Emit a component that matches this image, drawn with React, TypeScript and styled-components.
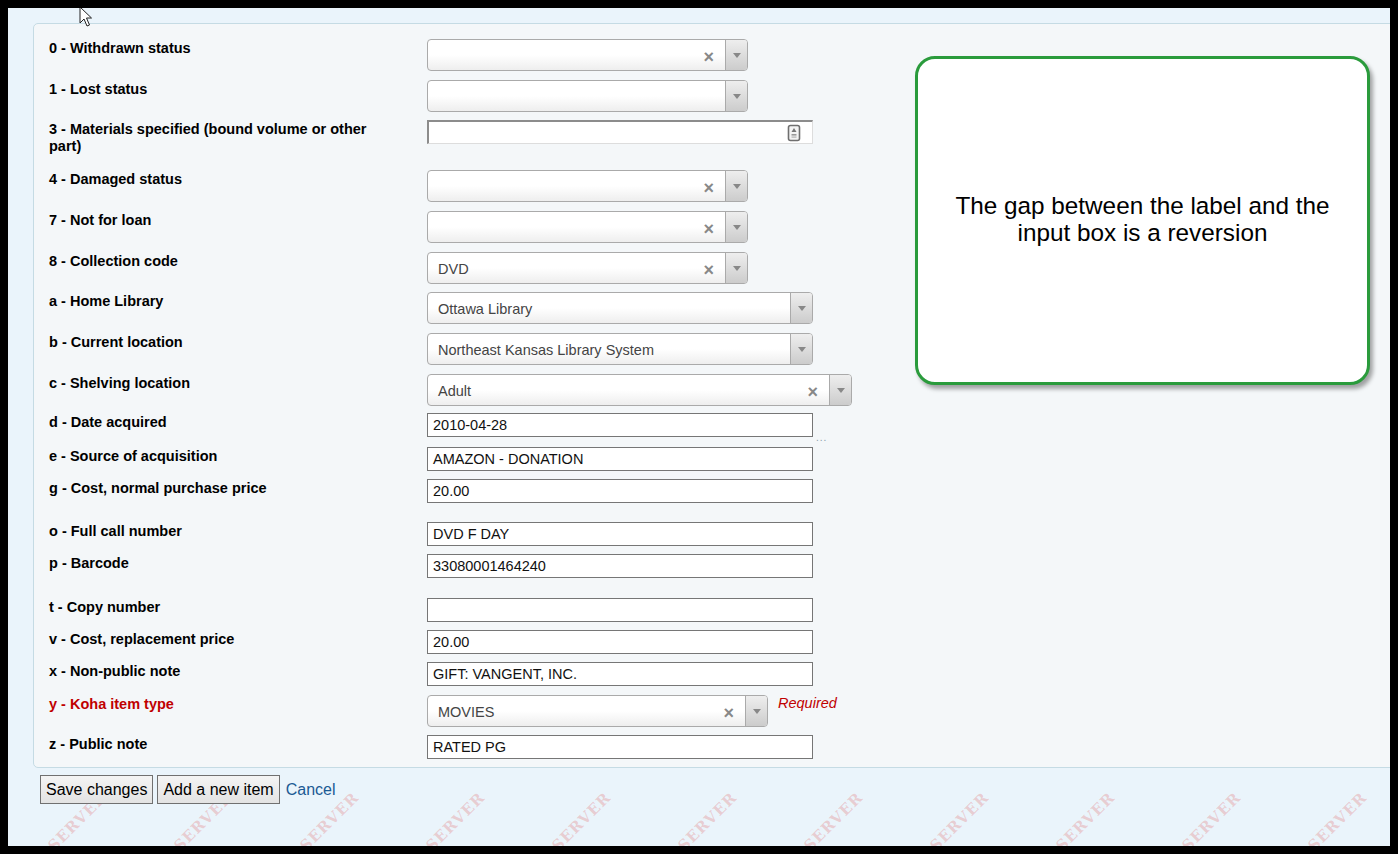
import styled, { createGlobalStyle } from "styled-components";

const GlobalStyle = createGlobalStyle`
    html, body {
        margin: 0;
        padding: 0;
        background: #000;
    }
    body {
        font-family: "Liberation Sans", Arial, sans-serif;
    }
`

const Frame = styled.div`
    width: 1398px;
    height: 854px;
    box-sizing: border-box;
    padding: 8px;
    background: #000;
`

const Page = styled.div`
    position: relative;
    height: 838px;
    overflow: hidden;
    background: #eaf4fb;
    padding: 15px 0 0 25px;
    box-sizing: border-box;
`

// the "TEST SERVER" background stamp, only its bottom row peeks out below the form
const Watermarks = styled.div`
    position: absolute;
    left: -13px;
    top: 770px;
    display: flex;
    pointer-events: none;
    z-index: 0;
`

const Mark = styled.span`
    flex: 0 0 auto;
    width: 126px;
    min-width: 0;
    height: 126px;
    display: flex;
    align-items: center;
    justify-content: center;
    transform: rotate(-45deg);
    color: rgba(225, 90, 90, 0.26);
    font-family: "DejaVu Serif", "Liberation Serif", serif;
    font-weight: bold;
    font-size: 15px;
    letter-spacing: 1px;
    white-space: nowrap;
`

const Fieldset = styled.div`
    position: relative;
    z-index: 1;
    width: 1400px;
    background: #f4f7f9;
    border: 1px solid #c5dbe4;
    border-radius: 5px;
    padding: 15px 0 0 15px;
`

const Row = styled.div<{ $h: number }>`
    display: flex;
    align-items: flex-start;
    height: ${p => p.$h}px;
`

const Label = styled.label<{ $required?: boolean }>`
    width: 340px;
    margin-right: 38px;
    padding-top: 1px;
    font-size: 14.5px;
    line-height: 17px;
    font-weight: bold;
    color: ${p => p.$required ? "#c00000" : "#000"};
`

const Select = styled.div<{ $w: number }>`
    display: flex;
    align-items: stretch;
    width: ${p => p.$w}px;
    height: 32px;
    box-sizing: border-box;
    border: 1px solid #aaa;
    border-radius: 4px;
    background: linear-gradient(#fff 50%, #eee);
    overflow: hidden;
`

const SelectValue = styled.span`
    flex: 1;
    padding: 1px 0 0 10px;
    font-size: 14.5px;
    line-height: 30px;
    color: #444;
`

const Clear = styled.span`
    margin: 4px 11px 0 0;
    font-size: 18px;
    line-height: 26px;
    font-weight: bold;
    color: #888;
`

const Arrow = styled.span`
    width: 21px;
    display: flex;
    align-items: center;
    justify-content: center;
    border-left: 1px solid #aaa;
    background: linear-gradient(#eee, #ccc);

    &::after {
        content: "";
        border-style: solid;
        border-width: 5px 4px 0 4px;
        border-color: #888 transparent transparent transparent;
        margin-top: 1px;
    }
`

const TextInput = styled.div`
    width: 386px;
    height: 24px;
    box-sizing: border-box;
    border: 1px solid #767676;
    background: #fff;
    padding: 1px 0 0 5px;
    font-size: 14.5px;
    line-height: 21px;
    color: #111;
`

const PluginInput = styled.div`
    display: flex;
    align-items: center;
    justify-content: flex-end;
    width: 386px;
    height: 24px;
    box-sizing: border-box;
    border-top: 2px solid #8c8c8c;
    border-left: 2px solid #8c8c8c;
    border-right: 1px solid #ddd;
    border-bottom: 1px solid #ddd;
    background: #fff;
    padding-right: 11px;
`

const Dots = styled.span`
    align-self: flex-end;
    margin: 0 0 4px 3px;
    font-size: 10px;
    color: #8a9aa8;
    letter-spacing: 1px;
`

const Required = styled.span`
    margin-left: 10px;
    font-size: 14.5px;
    line-height: 17px;
    font-style: italic;
    color: #c00000;
`

const Actions = styled.div`
    position: relative;
    z-index: 1;
    display: flex;
    align-items: center;
    gap: 4px;
    margin: 7px 0 0 7px;
`

const Button = styled.button`
    height: 29px;
    padding: 0 5px;
    border: 1px solid #707070;
    border-radius: 0;
    background: linear-gradient(#f4f4f4, #e3e3e3);
    font-family: "Liberation Sans", Arial, sans-serif;
    font-size: 16px;
    color: #000;
`

const CancelLink = styled.a`
    margin-left: 2px;
    font-size: 16px;
    color: #1b5a94;
    text-decoration: none;
`

const Callout = styled.div`
    position: absolute;
    z-index: 2;
    left: 907px;
    top: 48px;
    width: 455px;
    height: 329px;
    box-sizing: border-box;
    border: 3px solid #2a9b3c;
    border-radius: 20px;
    background: #fff;
    box-shadow: 3px 4px 4px rgba(0, 0, 0, 0.35);
    display: flex;
    align-items: center;
    justify-content: center;
    padding: 0 36px 4px;
    text-align: center;
    font-size: 24.3px;
    line-height: 27px;
    color: #000;
`

const Cursor = styled.svg`
    position: absolute;
    z-index: 3;
    left: 71px;
    top: -2px;
`

type Field =
    | { label: string; h: number; kind: "select"; w: number; value?: string; clear?: boolean; required?: boolean }
    | { label: string; h: number; kind: "text"; value: string; date?: boolean }
    | { label: string; h: number; kind: "plugin" }

const fields: Field[] = [
    { label: "0 - Withdrawn status", h: 41, kind: "select", w: 321, clear: true },
    { label: "1 - Lost status", h: 40, kind: "select", w: 321 },
    { label: "3 - Materials specified (bound volume or other part)", h: 50, kind: "plugin" },
    { label: "4 - Damaged status", h: 41, kind: "select", w: 321, clear: true },
    { label: "7 - Not for loan", h: 41, kind: "select", w: 321, clear: true },
    { label: "8 - Collection code", h: 40, kind: "select", w: 321, value: "DVD", clear: true },
    { label: "a - Home Library", h: 41, kind: "select", w: 386, value: "Ottawa Library" },
    { label: "b - Current location", h: 41, kind: "select", w: 386, value: "Northeast Kansas Library System" },
    { label: "c - Shelving location", h: 39, kind: "select", w: 425, value: "Adult", clear: true },
    { label: "d - Date acquired", h: 34, kind: "text", value: "2010-04-28", date: true },
    { label: "e - Source of acquisition", h: 32, kind: "text", value: "AMAZON - DONATION" },
    { label: "g - Cost, normal purchase price", h: 43, kind: "text", value: "20.00" },
    { label: "o - Full call number", h: 32, kind: "text", value: "DVD F DAY" },
    { label: "p - Barcode", h: 44, kind: "text", value: "33080001464240" },
    { label: "t - Copy number", h: 32, kind: "text", value: "" },
    { label: "v - Cost, replacement price", h: 32, kind: "text", value: "20.00" },
    { label: "x - Non-public note", h: 33, kind: "text", value: "GIFT: VANGENT, INC." },
    { label: "y - Koha item type", h: 40, kind: "select", w: 341, value: "MOVIES", clear: true, required: true },
    { label: "z - Public note", h: 32, kind: "text", value: "RATED PG" },
]

function PluginIcon() {
    return (
        <svg width="14" height="18" viewBox="0 0 14 18">
            <rect x="1.5" y="1.5" width="11" height="15" rx="2" fill="#f4f4f4" stroke="#6f6f6f" strokeWidth="1.6" />
            <path d="M4.5 8 L7 4 L9.5 8 Z" fill="#777" />
            <rect x="4.5" y="10" width="5" height="1.6" fill="#999" />
            <rect x="4.5" y="12.4" width="5" height="1.4" fill="#bbb" />
        </svg>
    )
}

function FieldInput({ field }: { field: Field }) {
    switch (field.kind) {
        case "select":
            return (<>
                <Select $w={field.w}>
                    <SelectValue>{field.value}</SelectValue>
                    {field.clear && <Clear>×</Clear>}
                    <Arrow />
                </Select>
                {field.required && <Required>Required</Required>}
            </>)
        case "plugin":
            return (
                <PluginInput>
                    <PluginIcon />
                </PluginInput>
            )
        default:
            return (<>
                <TextInput>{field.value}</TextInput>
                {field.date && <Dots>...</Dots>}
            </>)
    }
}

export default function App() {
    const marks = Array.from({ length: 11 })

    return (<>
        <GlobalStyle />
        <Frame>
            <Page>
                <Watermarks>
                    {marks.map((_, i) => <Mark key={i}>TEST SERVER</Mark>)}
                </Watermarks>
                <Cursor width="14" height="22" viewBox="0 0 14 22">
                    <path d="M1 1 L1 17 L5 13 L8 20 L10.5 19 L7.5 12 L12.5 12 Z" fill="#fff" stroke="#222" strokeWidth="1" strokeLinejoin="round" />
                </Cursor>
                <Fieldset>
                    {fields.map(field => (
                        <Row key={field.label} $h={field.h}>
                            <Label $required={field.kind === "select" && field.required}>{field.label}</Label>
                            <FieldInput field={field} />
                        </Row>
                    ))}
                </Fieldset>
                <Actions>
                    <Button>Save changes</Button>
                    <Button>Add a new item</Button>
                    <CancelLink href="#">Cancel</CancelLink>
                </Actions>
                <Callout>The gap between the label and the input box is a reversion</Callout>
            </Page>
        </Frame>
    </>)
}
